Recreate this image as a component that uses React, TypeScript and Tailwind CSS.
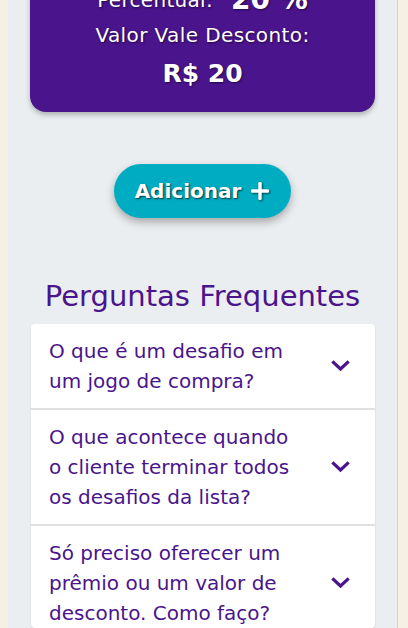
import React from "react";

const Chevron = () => (
  <svg width="19" height="12" viewBox="0 0 19 12" className="shrink-0">
    <path d="M2.5 2.5 L9.5 9 L16.5 2.5" fill="none" stroke="#4a148c" strokeWidth="3.2" strokeLinecap="square" strokeLinejoin="miter" />
  </svg>
);

const faqs = [
  "O que é um desafio em um jogo de compra?",
  "O que acontece quando o cliente terminar todos os desafios da lista?",
  "Só preciso oferecer um prêmio ou um valor de desconto. Como faço?",
];

export default function App() {
  return (
    <div className="h-[628px] w-full overflow-hidden bg-[#f6efe3] pl-[8px] pr-[10px] font-['DejaVu_Sans',sans-serif]">
      <div className="flex h-full flex-col border-r border-[#d3d3d3] bg-[#ebeef0] px-[22px]">
        <div className="-mt-[42px] rounded-[16px] bg-[#4a148c] pt-[22px] pb-[18px] text-white shadow-[0_3px_5px_rgba(0,0,0,0.25)] [text-shadow:1px_1px_2px_rgba(20,0,40,0.7)]">
          <div className="flex h-[40px] items-center justify-center gap-[18px]">
            <span className="text-[20px] tracking-[0.3px]">Percentual:</span>
            <span className="text-[28px] font-bold">20 %</span>
          </div>
          <div className="flex h-[30px] items-center justify-center text-[20px] leading-[30px] tracking-[0.4px]">Valor Vale Desconto:</div>
          <div className="mt-[4px] flex h-[40px] items-center justify-center text-[25px] font-bold leading-[40px]">R$ 20</div>
        </div>

        <div className="mt-[52px] flex justify-center">
          <button className="flex h-[54px] w-[177px] items-center justify-center gap-[9px] rounded-full bg-[#00acc1] text-[20px] font-bold text-white shadow-[0_4px_8px_rgba(0,0,0,0.3)] [text-shadow:1px_1px_2px_rgba(0,0,0,0.7)]">
            <span>Adicionar</span>
            <svg width="20" height="20" viewBox="0 0 20 20" className="[filter:drop-shadow(1px_1px_1px_rgba(0,0,0,0.6))]">
              <rect x="8.3" y="1" width="3.4" height="18" rx="1.2" fill="white" />
              <rect x="1" y="8.3" width="18" height="3.4" rx="1.2" fill="white" />
            </svg>
          </button>
        </div>

        <h2 className="mt-[58px] h-[40px] text-center text-[29px] leading-[40px] text-[#4a148c]">Perguntas Frequentes</h2>

        <div className="ml-[1px] mt-[8px] overflow-hidden rounded-[4px] bg-white shadow-[0_1px_2px_rgba(0,0,0,0.12)]">
          {faqs.map((q, i) => (
            <div
              key={i}
              className={`flex items-center justify-between py-[12px] pl-[18px] pr-[25px] ${i > 0 ? "border-t-2 border-[#e0e0e2]" : ""}`}
            >
              <p className="w-[250px] text-[20px] leading-[30px] text-[#4a148c]">{q}</p>
              <Chevron />
            </div>
          ))}
        </div>
      </div>
    </div>
  );
}
